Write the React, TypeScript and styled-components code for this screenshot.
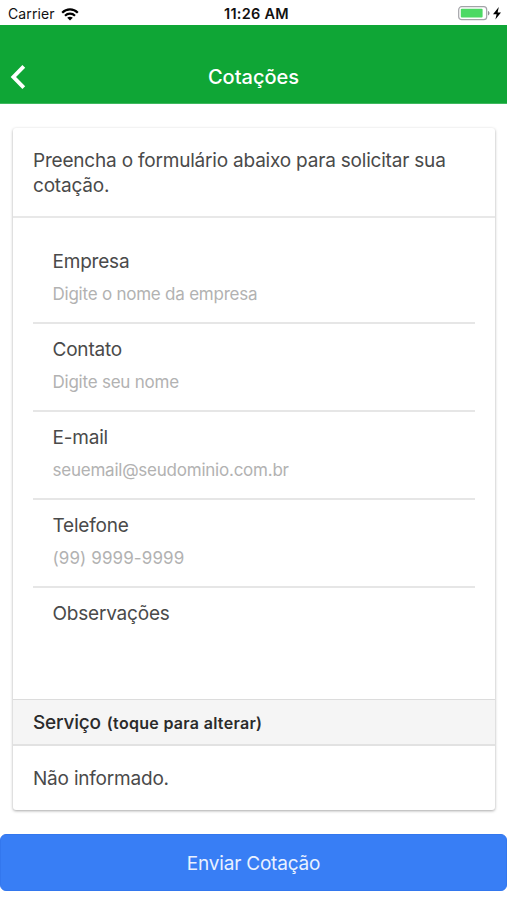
import React from "react";
import styled, { createGlobalStyle } from "styled-components";

const GlobalStyle = createGlobalStyle`
  *, *::before, *::after { box-sizing: border-box; }
  body {
    margin: 0;
    background: #fff;
    color: #4a4a4a;
    font-family: Inter, "Liberation Sans", sans-serif;
  }
`;

const Screen = styled.div`
  width: 507px;
  height: 900px;
  display: flex;
  flex-direction: column;
  overflow: hidden;
  background: #fff;
`;

const StatusBar = styled.div`
  height: 25px;
  flex: none;
  display: grid;
  grid-template-columns: 1fr auto 1fr;
  align-items: center;
  padding: 3px 5px 0 8px;
  color: #111;
  font-size: 14px;
  line-height: 20px;
`;

const Carrier = styled.div`
  display: flex;
  align-items: center;
  gap: 6px;
  letter-spacing: 0.1px;
`;

const Clock = styled.div`
  font-weight: 600;
  font-size: 14.5px;
  letter-spacing: 0.25px;
  padding-left: 3px;
`;

const Power = styled.div`
  display: flex;
  align-items: center;
  justify-content: flex-end;
`;

const Header = styled.header`
  height: 79px;
  flex: none;
  display: grid;
  grid-template-columns: 48px 1fr 48px;
  align-items: center;
  padding-top: 25px;
  background: #0fa636;
  border-bottom: 1px solid #3fb85f;
  color: #fff;
`;

const BackButton = styled.button`
  height: 44px;
  padding: 0 0 0 10px;
  border: 0;
  background: none;
  display: flex;
  align-items: center;
`;

const Title = styled.h1`
  margin: 0;
  text-align: center;
  font-size: 20px;
  font-weight: 500;
  line-height: 26px;
`;

const Card = styled.section`
  margin: 24px 12px 0 13px;
  height: 682px;
  flex: none;
  display: flex;
  flex-direction: column;
  border-radius: 3px;
  overflow: hidden;
  box-shadow: 0 1px 3px rgba(0, 0, 0, 0.35);
  letter-spacing: -0.2px;
`;

const Intro = styled.p`
  margin: 0;
  height: 90px;
  flex: none;
  padding: 20px 20px 0;
  border-bottom: 2px solid #e8e8e8;
  font-size: 19px;
  line-height: 25px;
`;

const Form = styled.form`
  flex: 1;
  padding: 18px 20px 0;
`;

const Field = styled.label<{ $last?: boolean }>`
  height: 88px;
  display: flex;
  flex-direction: column;
  padding: 13px 20px 0 19.5px;
  border-bottom: ${(p) => (p.$last ? "0" : "2px solid #e6e6e6")};
`;

const FieldName = styled.span`
  font-size: 19px;
  line-height: 26px;
`;

const FieldInput = styled.input`
  margin: 6px 0 0;
  padding: 0;
  height: 26px;
  border: 0;
  outline: 0;
  background: transparent;
  color: #4a4a4a;
  font: inherit;
  font-size: 17px;
  letter-spacing: ${(p) => (p.type === "tel" ? "0.1px" : "-0.23px")};
  &::placeholder {
    color: #b2b2b2;
    opacity: 1;
  }
`;

const ServiceBar = styled.div`
  height: 47px;
  flex: none;
  display: flex;
  align-items: baseline;
  gap: 6px;
  padding: 10px 20px 0;
  border-top: 1px solid #dcdcdc;
  border-bottom: 2px solid #e2e2e2;
  background: #f5f5f5;
  color: #2b2b2b;
  font-size: 19px;
  font-weight: 500;
  line-height: 26px;
`;

const Hint = styled.small`
  font-size: 16px;
  font-weight: 600;
  letter-spacing: 0.3px;
`;

const ServiceValue = styled.div`
  height: 64px;
  flex: none;
  padding: 20px 20px 0;
  font-size: 19px;
  line-height: 26px;
`;

const Submit = styled.button`
  flex: none;
  width: 507px;
  height: 57px;
  margin: 24px 0 0;
  padding: 2px 0 0;
  border: 1px solid #3377ee;
  border-radius: 6px;
  background: #387ef5;
  color: #e9f1ff;
  font: inherit;
  font-size: 19px;
  letter-spacing: -0.2px;
`;

type FieldData = { label: string; placeholder: string; type: string };

const fields: FieldData[] = [
  { label: "Empresa", placeholder: "Digite o nome da empresa", type: "text" },
  { label: "Contato", placeholder: "Digite seu nome", type: "text" },
  { label: "E-mail", placeholder: "seuemail@seudominio.com.br", type: "email" },
  { label: "Telefone", placeholder: "(99) 9999-9999", type: "tel" },
  { label: "Observações", placeholder: "", type: "text" },
];

const WifiIcon = () => (
  <svg width="18" height="13" viewBox="0 0 18 13" fill="none" stroke="#000" strokeWidth="2.2">
    <path d="M1.2 4.8C5.6.3 12.4.3 16.8 4.8" />
    <path d="M4 7.7C6.8 5 11.2 5 14 7.7" />
    <path d="M9 12.6 6.2 9.8C7.7 8.3 10.3 8.3 11.8 9.8Z" fill="#000" stroke="none" />
  </svg>
);

const BatteryIcon = () => (
  <svg width="44" height="16" viewBox="0 0 44 16">
    <rect x="0.7" y="0.7" width="28" height="13" rx="3" fill="#fff" stroke="#a3a3a8" strokeWidth="1.2" />
    <rect x="2.8" y="2.8" width="21.8" height="8.8" rx="1" fill="#4cd964" />
    <path d="M30 5C32 5.7 32 8.7 30 9.4Z" fill="#8d8d92" />
    <path d="M40.8 1 35 8.2H38.6L37.4 13.6 43 6.5H39.6Z" fill="#000" />
  </svg>
);

const BackIcon = () => (
  <svg width="16" height="26" viewBox="0 0 16 26" fill="none" stroke="#fff" strokeWidth="3.9">
    <path d="M13.8 2.4 3.4 13 13.8 23.6" />
  </svg>
);

export default function App() {
  return (
    <>
      <GlobalStyle />
      <Screen>
        <StatusBar>
          <Carrier>
            <span>Carrier</span>
            <WifiIcon />
          </Carrier>
          <Clock>11:26 AM</Clock>
          <Power>
            <BatteryIcon />
          </Power>
        </StatusBar>
        <Header>
          <BackButton type="button" aria-label="Voltar">
            <BackIcon />
          </BackButton>
          <Title>Cotações</Title>
        </Header>
        <Card>
          <Intro>Preencha o formulário abaixo para solicitar sua cotação.</Intro>
          <Form>
            {fields.map((f, i) => (
              <Field key={f.label} $last={i === fields.length - 1}>
                <FieldName>{f.label}</FieldName>
                <FieldInput type={f.type} placeholder={f.placeholder} />
              </Field>
            ))}
          </Form>
          <ServiceBar>
            Serviço <Hint>(toque para alterar)</Hint>
          </ServiceBar>
          <ServiceValue>Não informado.</ServiceValue>
        </Card>
        <Submit type="button">Enviar Cotação</Submit>
      </Screen>
    </>
  );
}
